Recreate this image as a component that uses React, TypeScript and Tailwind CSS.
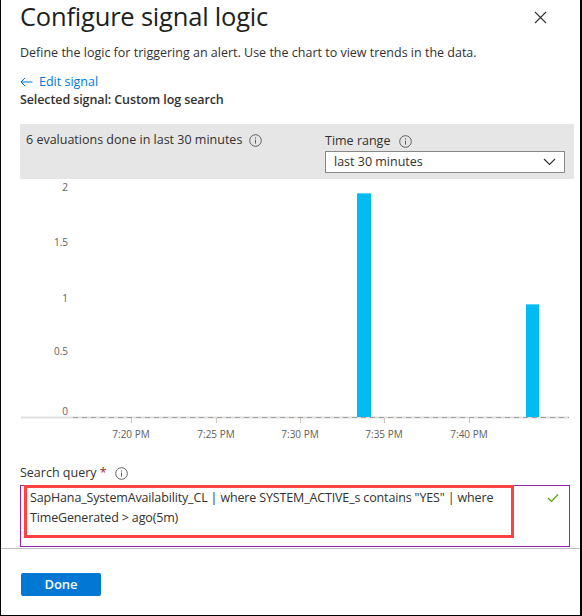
import React from "react";

function InfoIcon() {
  return (
    <svg width="13" height="13" viewBox="0 0 13 13" className="inline-block">
      <circle cx="6.5" cy="6.5" r="5.8" fill="none" stroke="#605e5c" strokeWidth="1" />
      <line x1="6.5" y1="5.6" x2="6.5" y2="9.6" stroke="#605e5c" strokeWidth="1" />
      <circle cx="6.5" cy="3.9" r="0.7" fill="#605e5c" />
    </svg>
  );
}

const yTicks = [
  { label: "2", y: 8 },
  { label: "1.5", y: 63 },
  { label: "1", y: 119 },
  { label: "0.5", y: 172 },
  { label: "0", y: 232 },
];

const xTicks = [
  { label: "7:20 PM", x: 111 },
  { label: "7:25 PM", x: 196 },
  { label: "7:30 PM", x: 280 },
  { label: "7:35 PM", x: 364 },
  { label: "7:40 PM", x: 449 },
];

const bars = [
  { x: 337, y: 14, w: 14 },
  { x: 506, y: 125, w: 13 },
];

function Chart() {
  return (
    <svg width="553" height="268" className="block font-['Open_Sans',sans-serif]">
      {yTicks.map((t) => (
        <text key={t.label} x="48" y={t.y + 3.5} textAnchor="end" fontSize="10" fill="#605e5c">
          {t.label}
        </text>
      ))}
      <line x1="1" y1="238.5" x2="549" y2="238.5" stroke="#e1dfdd" strokeWidth="2" />
      <line x1="53" y1="238.5" x2="549" y2="238.5" stroke="#a19f9d" strokeWidth="1" strokeDasharray="5 4" />
      {xTicks.map((t) => (
        <g key={t.label}>
          <line x1={t.x + 0.5} y1="239" x2={t.x + 0.5} y2="244" stroke="#c8c6c4" />
          <text x={t.x} y="259" textAnchor="middle" fontSize="10" fill="#605e5c">
            {t.label}
          </text>
        </g>
      ))}
      {bars.map((b) => (
        <g key={b.x}>
          <rect x={b.x} y={b.y} width={b.w} height={238 - b.y} fill="#00bcf2" />
          <rect x={b.x} y={b.y} width={b.w} height="1" fill="#5fd3f5" />
        </g>
      ))}
    </svg>
  );
}

export default function App() {
  return (
    <div className="w-[582px] h-[616px] flex flex-col bg-white border-l border-r-2 border-b border-black overflow-hidden font-['Open_Sans',sans-serif] text-[12.5px] text-[#323130]">
      <div className="h-[548px] overflow-hidden pl-[19px] pr-[7px] shrink-0">
        <div className="flex items-start justify-between">
          <h1 className="text-[25.5px] leading-8 text-[#201f1e] tracking-[-0.2px]">Configure signal logic</h1>
          <button className="mt-[11px] mr-[26px]">
            <svg width="13" height="13" viewBox="0 0 13 13">
              <path d="M1 1 L12 12 M12 1 L1 12" stroke="#323130" strokeWidth="1.1" />
            </svg>
          </button>
        </div>
        <p className="mt-[11px] leading-5">
          Define the logic for triggering an alert. Use the chart to view trends in the data.
        </p>
        <a className="mt-[10px] flex items-center gap-[6px] leading-[18px] text-[#0078d4]">
          <svg width="13" height="10" viewBox="0 0 13 10">
            <path d="M12.5 5 H1 M5 1 L1 5 L5 9" fill="none" stroke="#0078d4" strokeWidth="1" />
          </svg>
          <span>Edit signal</span>
        </a>
        <p className="leading-[18px] font-semibold tracking-[-0.1px]">Selected signal: Custom log search</p>

        <div className="mt-[15px] h-[55px] w-[554px] bg-[#e6e6e6] flex">
          <div className="w-[305px] pl-[6px] pt-[6px] leading-5 flex items-center gap-[7px] self-start">
            <span>6 evaluations done in last 30 minutes</span>
            <InfoIcon />
          </div>
          <div className="pt-[7px]">
            <div className="flex items-center gap-[9px] leading-5">
              <span>Time range</span>
              <InfoIcon />
            </div>
            <div className="w-[240px] h-[22px] bg-white border border-[#8a8886] flex items-center justify-between pl-[8px] pr-[8px]">
              <span>last 30 minutes</span>
              <svg width="13" height="8" viewBox="0 0 13 8">
                <path d="M1 1 L6.5 6.5 L12 1" fill="none" stroke="#323130" strokeWidth="1.1" />
              </svg>
            </div>
          </div>
        </div>

        <Chart />

        <div className="mt-[16px] flex items-center gap-[8px] leading-5">
          <span>
            Search query <span className="text-[#a4262c]">*</span>
          </span>
          <InfoIcon />
        </div>
        <div className="relative mt-[2px] w-[550px] h-[62px] border border-[#8e24aa] flex justify-between pl-[9px] pr-[10px] pt-[2px]">
          <div className="leading-5 tracking-[-0.15px]">
            <div>SapHana_SystemAvailability_CL | where SYSTEM_ACTIVE_s contains "YES" | where</div>
            <div>TimeGenerated &gt; ago(5m)</div>
          </div>
          <svg width="12" height="10" viewBox="0 0 12 10" className="mt-[5px]">
            <path d="M1 5 L4.5 8.5 L11 1.5" fill="none" stroke="#57a300" strokeWidth="1.2" />
          </svg>
          <div className="absolute left-[3px] top-[-1px] w-[490px] h-[53px] border-[3px] border-[#ff4343]" />
        </div>
      </div>
      <div className="border-t border-[#bcbcbc] pt-[24px] pl-[20px]">
        <button className="w-[80px] h-[23px] bg-[#0078d4] text-white text-[13px] font-semibold rounded-[2px] leading-[23px]">
          Done
        </button>
      </div>
    </div>
  );
}
